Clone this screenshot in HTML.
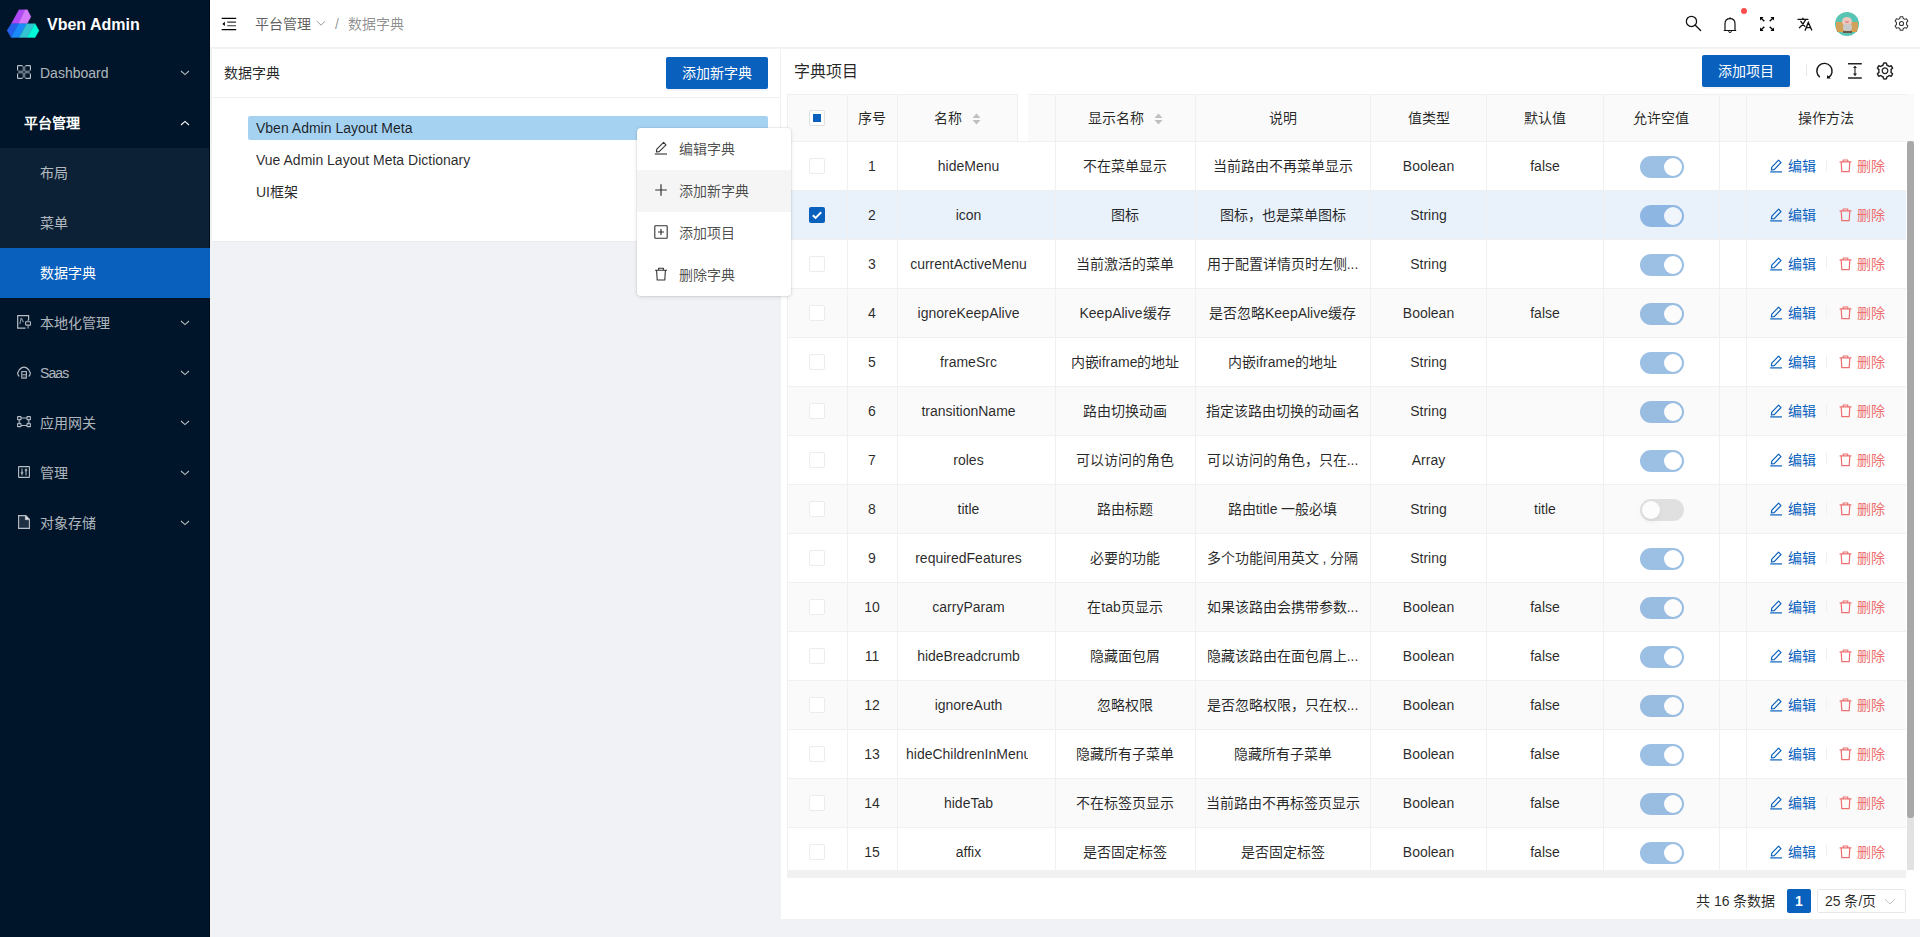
<!DOCTYPE html>
<html lang="zh-CN"><head><meta charset="utf-8">
<style>
*{box-sizing:border-box;margin:0;padding:0}
html,body{width:1920px;height:937px;overflow:hidden;background:#f0f2f5;font-family:"Liberation Sans",sans-serif;font-size:14px;color:rgba(0,0,0,.85)}
.a{position:absolute}
#side{left:0;top:0;width:210px;height:937px;background:#001529}
#side .edge{left:209px;top:0;width:1px;height:937px;background:#000c17}
.mi{position:absolute;left:0;width:209px;height:50px;line-height:50px;color:rgba(255,255,255,.7);white-space:nowrap}
.mi .t{position:absolute;left:40px;top:0}
.mi svg.ic{position:absolute;left:17px;top:18px}
.mi svg.ch{position:absolute;left:180px;top:21px}
#hdr{left:210px;top:0;width:1710px;height:47px;background:#fff}
#hline{left:210px;top:47px;width:1710px;height:1px;background:#f0f0f0}
.card{background:#fff}
.btn{position:absolute;background:#0960bd;color:#fff;border-radius:2px;text-align:center;line-height:32px;height:32px;box-shadow:0 2px 0 rgba(0,0,0,.045)}
.th{position:absolute;top:94px;height:47px;line-height:47px;background:#fafafa;text-align:center;color:rgba(0,0,0,.85)}
.row{position:absolute;left:787px;width:1119px;height:49px}
.cell{position:absolute;top:0;height:49px;line-height:48px;text-align:center;white-space:nowrap;overflow:hidden}
.vl{position:absolute;width:1px;background:#f0f0f0}
.hl{position:absolute;height:1px;background:#f0f0f0}
</style></head><body>

<!-- SIDEBAR -->
<div id="side" class="a">
  <div class="a edge"></div>
  <svg class="a" style="left:0;top:0" width="48" height="48" viewBox="0 0 48 48">
    <polygon points="11.3,23.7 19,9.8 25,9.8 18.6,23.7" fill="#b04af8" stroke="#b04af8" stroke-width="0.35"/>
    <polygon points="25,9.8 27.4,9.8 30.9,16.8 27.05,23.7 18.6,23.7" fill="#d67afc" stroke="#d67afc" stroke-width="0.35"/>
    <polygon points="7.07,30.6 11.3,23.7 18.6,23.7 11.3,37.5" fill="#2462ee" stroke="#2462ee" stroke-width="0.35"/>
    <polygon points="18.6,23.7 26.7,23.7 19.4,37.5 11.3,37.5" fill="#1a8bf8" stroke="#1a8bf8" stroke-width="0.35"/>
    <polygon points="26.7,23.7 34.7,23.7 27.4,37.5 19.4,37.5" fill="#34c3d0" stroke="#34c3d0" stroke-width="0.35"/>
    <polygon points="34.7,23.7 35.1,23.7 39,30.6 35.1,37.5 27.4,37.5" fill="#00fad8" stroke="#00fad8" stroke-width="0.35"/>
  </svg>
  <div class="a" style="left:47px;top:15px;font-size:16px;font-weight:bold;color:#fff;line-height:20px">Vben Admin</div>

  <div class="mi" style="top:48px"><svg class="a" style="left:17px;top:17px" width="14" height="14" viewBox="0 0 14 14"><g fill="#66727f"><rect x="5.4" y="1.2" width="3.2" height="11.6"/><rect x="1.2" y="5.4" width="11.6" height="3.2"/></g><rect x="6.3" y="6.3" width="1.4" height="1.4" fill="#001529"/><g fill="none" stroke="#b8bec6" stroke-width="1.2"><path d="M5.6 0.6H1.2Q0.6 0.6 0.6 1.2V5.6M8.4 0.6H12.8Q13.4 0.6 13.4 1.2V5.6M5.6 13.4H1.2Q0.6 13.4 0.6 12.8V8.4M8.4 13.4H12.8Q13.4 13.4 13.4 12.8V8.4"/></g><g fill="#001529"><rect x="1.8" y="1.8" width="3.4" height="3.4"/><rect x="8.8" y="1.8" width="3.4" height="3.4"/><rect x="1.8" y="8.8" width="3.4" height="3.4"/><rect x="8.8" y="8.8" width="3.4" height="3.4"/></g></svg><span class="t">Dashboard</span></div>
  <svg class="a" width="10" height="6" viewBox="0 0 10 6" style="left:180px;top:70px"><path d="M1 1L5 4.6L9 1" fill="none" stroke="rgba(255,255,255,.7)" stroke-width="1.1"/></svg>
  <div class="mi" style="top:98px;color:#fff;font-weight:bold"><span class="t" style="left:24px">平台管理</span></div>
  <svg class="a" width="10" height="6" viewBox="0 0 10 6" style="left:180px;top:120px"><path d="M1 5L5 1.4L9 5" fill="none" stroke="#fff" stroke-width="1.1"/></svg>
  <div class="a" style="left:0;top:148px;width:209px;height:150px;background:#0c2135"></div>
  <div class="mi" style="top:148px"><span class="t">布局</span></div>
  <div class="mi" style="top:198px"><span class="t">菜单</span></div>
  <div class="mi" style="top:248px;background:#0960bd;color:#fff;width:210px"><span class="t">数据字典</span></div>

  <div class="mi" style="top:298px"><svg class="a" style="left:17px;top:17px" width="14" height="14" viewBox="0 0 14 14"><path d="M11.6 5.2V0.7H0.7V13.1H8.6" fill="none" stroke="#b8bec6" stroke-width="1.2"/><path d="M4.2 2.8L2.8 9.2M4.4 3L6.4 7.2" fill="none" stroke="#8b96a2" stroke-width="1.1"/><rect x="8.6" y="6.7" width="5" height="3.4" rx="0.5" fill="none" stroke="#b8bec6" stroke-width="1.1"/><path d="M11.1 4.8V6.7M11.1 10.1V13.5" stroke="#8b96a2" stroke-width="1.3"/></svg><span class="t">本地化管理</span></div>
  <svg class="a" width="10" height="6" viewBox="0 0 10 6" style="left:180px;top:320px"><path d="M1 1L5 4.6L9 1" fill="none" stroke="rgba(255,255,255,.7)" stroke-width="1.1"/></svg>
  <div class="mi" style="top:348px"><svg class="a" style="left:17px;top:18px" width="14" height="13" viewBox="0 0 14 13"><path d="M2.3 10.4C0.9 9.4 0.5 8 0.8 6.7 1.3 4.6 3 2.6 4.9 1.6 6.2 1 7.8 1 9.1 1.6 11 2.6 12.7 4.6 13.2 6.7 13.5 8 13.1 9.4 11.7 10.4" fill="none" stroke="#b8bec6" stroke-width="1.2"/><rect x="4.8" y="5.6" width="4.6" height="6.5" fill="none" stroke="#b8bec6" stroke-width="1.1"/><path d="M5.3 8.8H9" stroke="#b8bec6" stroke-width="1"/><rect x="5.2" y="10.6" width="4" height="1.5" fill="#6d7986"/></svg><span class="t" style="letter-spacing:-0.9px">Saas</span></div>
  <svg class="a" width="10" height="6" viewBox="0 0 10 6" style="left:180px;top:370px"><path d="M1 1L5 4.6L9 1" fill="none" stroke="rgba(255,255,255,.7)" stroke-width="1.1"/></svg>
  <div class="mi" style="top:398px"><svg class="a" style="left:17px;top:18px" width="14" height="12" viewBox="0 0 14 12"><g fill="none" stroke="#b8bec6" stroke-width="1.1"><rect x="0.6" y="0.6" width="3.4" height="3" rx="0.4"/><rect x="10" y="0.6" width="3.4" height="3" rx="0.4"/><rect x="0.6" y="7.6" width="3.4" height="3" rx="0.4"/><rect x="10" y="7.6" width="3.4" height="3" rx="0.4"/><path d="M4 2H10M4 9.5H10"/></g><path d="M2.3 3.6V7.6M11.7 3.6V7.6" stroke="#8b96a2" stroke-width="1.6"/></svg><span class="t">应用网关</span></div>
  <svg class="a" width="10" height="6" viewBox="0 0 10 6" style="left:180px;top:420px"><path d="M1 1L5 4.6L9 1" fill="none" stroke="rgba(255,255,255,.7)" stroke-width="1.1"/></svg>
  <div class="mi" style="top:448px"><svg class="a" style="left:18px;top:18px" width="12" height="12" viewBox="0 0 12 12"><rect x="0.6" y="0.6" width="10.8" height="10.8" rx="0.5" fill="none" stroke="#b8bec6" stroke-width="1.1"/><path d="M4 2.5V9.5M8 2.5V9.5" stroke="#b8bec6" stroke-width="1"/><circle cx="4" cy="6.8" r="0.9" fill="none" stroke="#b8bec6" stroke-width="0.9"/><circle cx="8" cy="4.2" r="0.9" fill="none" stroke="#b8bec6" stroke-width="0.9"/></svg><span class="t">管理</span></div>
  <svg class="a" width="10" height="6" viewBox="0 0 10 6" style="left:180px;top:470px"><path d="M1 1L5 4.6L9 1" fill="none" stroke="rgba(255,255,255,.7)" stroke-width="1.1"/></svg>
  <div class="mi" style="top:498px"><svg class="a" style="left:18px;top:17px" width="12" height="14" viewBox="0 0 12 14"><path d="M0.6 0.6H7.8L11.4 4.2V13.4H0.6Z" fill="#1d2f42" stroke="#b8bec6" stroke-width="1.1"/><path d="M7.4 0.8V4.6H11.2" fill="#e8eaee" stroke="#b8bec6" stroke-width="1"/></svg><span class="t">对象存储</span></div>
  <svg class="a" width="10" height="6" viewBox="0 0 10 6" style="left:180px;top:520px"><path d="M1 1L5 4.6L9 1" fill="none" stroke="rgba(255,255,255,.7)" stroke-width="1.1"/></svg>

</div>

<!-- HEADER -->
<div id="hdr" class="a">
  <svg class="a" style="left:1px;top:10px" width="30" height="28" viewBox="0 0 30 28"><g fill="none" stroke="#000"><path d="M10.7 8.4H25.2M10.7 19.6H25.2" stroke-width="1.3"/><path d="M16.2 12.1H25M16.2 15.8H25" stroke-width="1.1" stroke="#333"/></g><polygon points="11.3,14 13.9,11.8 13.9,16.1" fill="#000"/></svg>
  <div class="a" style="left:45px;top:14px;line-height:20px;color:rgba(0,0,0,.65)">平台管理</div>
  <svg class="a" style="left:106px;top:20px" width="10" height="7" viewBox="0 0 10 7"><path d="M1 1.2L5 5.2L9 1.2" fill="none" stroke="#999" stroke-width="1"/></svg>
  <div class="a" style="left:125px;top:14px;line-height:20px;color:rgba(0,0,0,.45)">/</div>
  <div class="a" style="left:138px;top:14px;line-height:20px;color:rgba(0,0,0,.45)">数据字典</div>

  <svg class="a" style="left:1475px;top:15px" width="18" height="18" viewBox="0 0 18 18"><circle cx="6.46" cy="6.4" r="5.1" fill="none" stroke="#111" stroke-width="1.25"/><path d="M10.3 10.2L15.6 15.5" stroke="#111" stroke-width="1.3" stroke-linecap="round"/></svg>
  <svg class="a" style="left:1512px;top:15px" width="16" height="19" viewBox="0 0 16 19"><path d="M3 15.3V8.8C3 5.7 5 3.6 8 3.6S13 5.7 13 8.8V15.3M1.8 15.5H14.2" fill="none" stroke="#111" stroke-width="1.2"/><path d="M6.6 16.2A1.4 1.3 0 0 0 9.4 16.2" fill="none" stroke="#111" stroke-width="1"/><path d="M8 2.2V3.6" stroke="#111" stroke-width="1.1"/></svg>
  <div class="a" style="left:1531px;top:8px;width:6px;height:6px;border-radius:3px;background:#ff4d4f"></div>
  <svg class="a" style="left:1549px;top:15.5px" width="16" height="16" viewBox="0 0 16 16"><g fill="none" stroke="#000" stroke-width="1.3"><path d="M1.5 1.5L5.3 5.3M14.5 1.5L10.7 5.3M1.5 14.5L5.3 10.7M14.5 14.5L10.7 10.7"/></g><g fill="#000"><polygon points="1,1 4.6,1 1,4.6"/><polygon points="15,1 11.4,1 15,4.6"/><polygon points="1,15 4.6,15 1,11.4"/><polygon points="15,15 11.4,15 15,11.4"/></g></svg>
  <svg class="a" style="left:1585px;top:15px" width="20" height="18" viewBox="0 0 20 18"><g fill="none" stroke="#111" stroke-width="1.35" stroke-linecap="round"><path d="M3 4.3H12.9M7.9 3.1V4.3M10.6 4.8C9.3 7.6 7.2 10.7 4.4 12.7M5.8 6.4C7.1 8.3 8.4 9.8 9.8 11.4"/><path d="M10.2 15.2L13.3 7.5L16.7 15M11.4 12.6H15.6"/></g></svg>
  <div class="a" style="left:1625px;top:12px;width:24px;height:24px;border-radius:50%;background:#58c4b4;overflow:hidden">
    <div class="a" style="left:1px;top:9.5px;width:22px;height:9px;background:#d2a25a"></div>
    <div class="a" style="left:0;top:18.5px;width:24px;height:1px;background:#e0a040"></div>
    <div class="a" style="left:7px;top:5px;width:10px;height:9px;border-radius:50%;background:#ebc9bc"></div>
    <div class="a" style="left:9.5px;top:8.5px;width:4px;height:2.5px;border-radius:50%;background:#e58c90"></div>
    <div class="a" style="left:7.5px;top:12px;width:9px;height:7px;border-radius:3px;background:#c9c9c9"></div>
    <div class="a" style="left:7.5px;top:19px;width:9px;height:2px;background:#6a5a4a"></div>
    <div class="a" style="left:2px;top:19px;width:1px;height:4px;background:#333"></div>
    <div class="a" style="left:21px;top:19px;width:1px;height:4px;background:#333"></div>
  </div>
  <svg class="a" style="left:1683.5px;top:16px" width="15" height="15" viewBox="0 0 16 16"><path d="M6.6 0.8H9.4L9.9 2.7L11.5 3.6L13.4 3L14.8 5.4L13.4 6.8V9.2L14.8 10.6L13.4 13L11.5 12.4L9.9 13.3L9.4 15.2H6.6L6.1 13.3L4.5 12.4L2.6 13L1.2 10.6L2.6 9.2V6.8L1.2 5.4L2.6 3L4.5 3.6L6.1 2.7Z" fill="none" stroke="#333" stroke-width="1.1" stroke-linejoin="round"/><circle cx="8" cy="8" r="2.2" fill="none" stroke="#333" stroke-width="1.1"/></svg>
</div>
<div id="hline" class="a"></div>

<!-- LEFT CARD -->
<div class="a card" style="left:211px;top:48px;width:569px;height:193px">
  <div class="a" style="left:13px;top:15px;line-height:20px">数据字典</div>
  <div class="btn" style="left:455px;top:9px;width:102px">添加新字典</div>
  <div class="a" style="left:0;top:49px;width:569px;height:1px;background:#f0f0f0"></div>
  <div class="a" style="left:37px;top:68px;width:520px;height:24px;background:#a6d2f2;border-radius:2px"></div>
  <div class="a" style="left:45px;top:70px;line-height:20px">Vben Admin Layout Meta</div>
  <div class="a" style="left:45px;top:102px;line-height:20px">Vue Admin Layout Meta Dictionary</div>
  <div class="a" style="left:45px;top:134px;line-height:20px">UI框架</div>
</div>
<div class="a" style="left:780px;top:48px;width:1px;height:871px;background:#f0f0f0"></div>
<div class="a" style="left:211px;top:48px;width:1px;height:194px;background:#f0f0f0"></div>
<div class="a" style="left:211px;top:241px;width:570px;height:1px;background:#ececec"></div>
<div class="a" style="left:211px;top:48px;width:1709px;height:1px;background:#f3f3f3"></div>

<!-- RIGHT CARD -->
<div class="a card" style="left:781px;top:49px;width:1139px;height:870px"></div>
<div class="a" style="left:794px;top:62px;font-size:16px;line-height:20px;color:rgba(0,0,0,.85)">字典项目</div>
<div class="btn" style="left:1702px;top:55px;width:88px">添加项目</div>
<div class="a" style="left:1806px;top:64px;width:1px;height:12px;background:#e8e8e8"></div>
<svg class="a" style="left:1814px;top:62px" width="20" height="18" viewBox="0 0 20 18"><path d="M5.74 15.08A7.65 7.65 0 1 1 14.28 15.68" fill="none" stroke="#111" stroke-width="1.4"/><polygon points="13.2,12.9 12.9,16.5 16.8,16.5" fill="#111"/></svg>
<svg class="a" style="left:1847px;top:62px" width="16" height="18" viewBox="0 0 16 18"><path d="M1 1.8H14.8M1 16H14.8" stroke="#222" stroke-width="1.4"/><path d="M8 4.5V13.5" stroke="#333" stroke-width="1.2"/><polygon points="8,3.7 6,6.1 10,6.1" fill="#222"/><polygon points="8,14 6,11.6 10,11.6" fill="#222"/></svg>
<svg class="a" style="left:1874.8px;top:60.9px" width="20" height="20" viewBox="0 0 1024 1024"><path fill="#222" d="M924.8 625.7l-65.5-56c3.1-19 4.7-38.4 4.7-57.8s-1.6-38.8-4.7-57.8l65.5-56a32.03 32.03 0 0 0 9.3-35.2l-.9-2.6a443.74 443.74 0 0 0-79.7-137.9l-1.8-2.1a32.12 32.12 0 0 0-35.1-9.5l-81.3 28.9c-30-24.6-63.5-44-99.7-57.6l-15.7-85a32.05 32.05 0 0 0-25.8-25.7l-2.7-.5c-52.1-9.4-106.9-9.4-159 0l-2.7.5a32.05 32.05 0 0 0-25.8 25.7l-15.8 85.4a351.86 351.86 0 0 0-99 57.4l-81.9-29.1a32 32 0 0 0-35.1 9.5l-1.8 2.1a446.02 446.02 0 0 0-79.7 137.9l-.9 2.6c-4.5 12.5-.8 26.5 9.3 35.2l66.3 56.6c-3.1 18.8-4.6 38-4.6 57.1 0 19.2 1.5 38.4 4.6 57.1L99 625.5a32.03 32.03 0 0 0-9.3 35.2l.9 2.6c18.1 50.4 44.9 96.9 79.7 137.9l1.8 2.1a32.12 32.12 0 0 0 35.1 9.5l81.9-29.1c29.8 24.5 63.1 43.9 99 57.4l15.8 85.4a32.050 32.05 0 0 0 25.8 25.7l2.7.5a449.4 449.4 0 0 0 159 0l2.7-.5a32.05 32.05 0 0 0 25.8-25.7l15.7-85a350 350 0 0 0 99.7-57.6l81.3 28.9a32 32 0 0 0 35.1-9.5l1.8-2.1c34.8-41.1 61.6-87.5 79.7-137.9l.9-2.6c4.5-12.3.8-26.3-9.3-35zM788.3 465.9c2.5 15.1 3.8 30.6 3.8 46.1s-1.3 31-3.8 46.1l-6.6 40.1 74.7 63.9a370.03 370.03 0 0 1-42.6 73.6L721 702.8l-31.4 25.8c-23.9 19.6-50.5 35-79.3 45.8l-38.1 14.3-17.9 97a377.5 377.5 0 0 1-85 0l-17.9-97.2-37.8-14.5c-28.5-10.8-55-26.2-78.7-45.7l-31.4-25.9-93.4 33.2c-17-22.9-31.2-47.6-42.6-73.6l75.5-64.5-6.5-40c-2.4-14.9-3.7-30.3-3.7-45.5 0-15.3 1.2-30.6 3.7-45.5l6.5-40-75.5-64.5c11.3-26.1 25.6-50.7 42.6-73.6l93.4 33.2 31.4-25.9c23.7-19.5 50.2-34.9 78.7-45.7l37.9-14.3 17.9-97.2c28.1-3.2 56.8-3.2 85 0l17.9 97 38.1 14.3c28.7 10.8 55.4 26.2 79.3 45.8l31.4 25.8 92.8-32.9c17 22.9 31.2 47.6 42.6 73.6L781.8 426l6.5 39.9zM512 326c-97.2 0-176 78.8-176 176s78.8 176 176 176 176-78.8 176-176-78.8-176-176-176zm79.2 255.2A111.6 111.6 0 0 1 512 614c-29.9 0-58-11.7-79.2-32.8A111.6 111.6 0 0 1 400 502c0-29.9 11.7-58 32.8-79.2C454 401.6 482.1 390 512 390c29.9 0 58 11.6 79.2 32.8A111.6 111.6 0 0 1 624 502c0 29.9-11.7 58-32.8 79.2z"/></svg>
<div class="a" style="left:787px;top:94px;width:1119px;height:776px;overflow:hidden">
<div class="a" style="left:0;top:0;width:1119px;height:47px;background:#fafafa"></div>
<div class="a" style="left:230px;top:0;width:11px;height:47px;background:#fff"></div>
<div class="a" style="left:0;top:48px;width:1119px;height:48px;background:#fff"></div>
<div class="a" style="left:0;top:97px;width:1119px;height:48px;background:#e9f1fb"></div>
<div class="a" style="left:0;top:146px;width:1119px;height:48px;background:#fff"></div>
<div class="a" style="left:0;top:195px;width:1119px;height:48px;background:#fafafa"></div>
<div class="a" style="left:0;top:244px;width:1119px;height:48px;background:#fff"></div>
<div class="a" style="left:0;top:293px;width:1119px;height:48px;background:#fafafa"></div>
<div class="a" style="left:0;top:342px;width:1119px;height:48px;background:#fff"></div>
<div class="a" style="left:0;top:391px;width:1119px;height:48px;background:#fafafa"></div>
<div class="a" style="left:0;top:440px;width:1119px;height:48px;background:#fff"></div>
<div class="a" style="left:0;top:489px;width:1119px;height:48px;background:#fafafa"></div>
<div class="a" style="left:0;top:538px;width:1119px;height:48px;background:#fff"></div>
<div class="a" style="left:0;top:587px;width:1119px;height:48px;background:#fafafa"></div>
<div class="a" style="left:0;top:636px;width:1119px;height:48px;background:#fff"></div>
<div class="a" style="left:0;top:685px;width:1119px;height:48px;background:#fafafa"></div>
<div class="a" style="left:0;top:734px;width:1119px;height:48px;background:#fff"></div>
<div class="hl" style="left:0;top:0;width:230px"></div>
<div class="hl" style="left:241px;top:0;width:878px"></div>
<div class="hl" style="left:0;top:47px;width:1119px"></div>
<div class="hl" style="left:0;top:96px;width:1119px"></div>
<div class="hl" style="left:0;top:145px;width:1119px"></div>
<div class="hl" style="left:0;top:194px;width:1119px"></div>
<div class="hl" style="left:0;top:243px;width:1119px"></div>
<div class="hl" style="left:0;top:292px;width:1119px"></div>
<div class="hl" style="left:0;top:341px;width:1119px"></div>
<div class="hl" style="left:0;top:390px;width:1119px"></div>
<div class="hl" style="left:0;top:439px;width:1119px"></div>
<div class="hl" style="left:0;top:488px;width:1119px"></div>
<div class="hl" style="left:0;top:537px;width:1119px"></div>
<div class="hl" style="left:0;top:586px;width:1119px"></div>
<div class="hl" style="left:0;top:635px;width:1119px"></div>
<div class="hl" style="left:0;top:684px;width:1119px"></div>
<div class="hl" style="left:0;top:733px;width:1119px"></div>
<div class="hl" style="left:0;top:782px;width:1119px"></div>
<div class="vl" style="left:0px;top:0;height:776px"></div>
<div class="vl" style="left:60px;top:0;height:776px"></div>
<div class="vl" style="left:110px;top:0;height:776px"></div>
<div class="vl" style="left:268px;top:0;height:776px"></div>
<div class="vl" style="left:408px;top:0;height:776px"></div>
<div class="vl" style="left:583px;top:0;height:776px"></div>
<div class="vl" style="left:699px;top:0;height:776px"></div>
<div class="vl" style="left:816px;top:0;height:776px"></div>
<div class="vl" style="left:932px;top:0;height:776px"></div>
<div class="vl" style="left:959px;top:0;height:776px"></div>
<div class="vl" style="left:230px;top:0;height:47px"></div>
<div class="a" style="left:-65px;top:14px;width:300px;text-align:center;line-height:20px;white-space:nowrap;">序号</div>
<div class="a" style="left:20px;top:14px;width:300px;text-align:center;line-height:20px;white-space:nowrap;">名称<svg style="display:inline-block;vertical-align:-3px;margin-left:10px" width="9" height="14" viewBox="0 0 9 14"><polygon points="4.5,1.5 8.5,6 0.5,6" fill="#bfbfbf"/><polygon points="4.5,12.5 8.5,8 0.5,8" fill="#bfbfbf"/></svg></div>
<div class="a" style="left:188px;top:14px;width:300px;text-align:center;line-height:20px;white-space:nowrap;">显示名称<svg style="display:inline-block;vertical-align:-3px;margin-left:10px" width="9" height="14" viewBox="0 0 9 14"><polygon points="4.5,1.5 8.5,6 0.5,6" fill="#bfbfbf"/><polygon points="4.5,12.5 8.5,8 0.5,8" fill="#bfbfbf"/></svg></div>
<div class="a" style="left:345.5px;top:14px;width:300px;text-align:center;line-height:20px;white-space:nowrap;">说明</div>
<div class="a" style="left:491.5px;top:14px;width:300px;text-align:center;line-height:20px;white-space:nowrap;">值类型</div>
<div class="a" style="left:608px;top:14px;width:300px;text-align:center;line-height:20px;white-space:nowrap;">默认值</div>
<div class="a" style="left:724px;top:14px;width:300px;text-align:center;line-height:20px;white-space:nowrap;">允许空值</div>
<div class="a" style="left:889px;top:14px;width:300px;text-align:center;line-height:20px;white-space:nowrap;">操作方法</div>
<div class="a" style="left:22px;top:16px;width:16px;height:16px;border:1px solid #e0e0e0;border-radius:2px;background:#fff"></div>
<div class="a" style="left:26px;top:20px;width:8px;height:8px;background:#0960bd"></div>
<div class="a" style="left:22px;top:64px;width:16px;height:16px;border:1px solid #ececec;border-radius:2px;background:#fff"></div>
<div class="a" style="left:-65px;top:62px;width:300px;text-align:center;line-height:20px;white-space:nowrap;">1</div>
<div class="a" style="left:31.5px;top:62px;width:300px;text-align:center;line-height:20px;white-space:nowrap;">hideMenu</div>
<div class="a" style="left:188px;top:62px;width:300px;text-align:center;line-height:20px;white-space:nowrap;">不在菜单显示</div>
<div class="a" style="left:345.5px;top:62px;width:300px;text-align:center;line-height:20px;white-space:nowrap;">当前路由不再菜单显示</div>
<div class="a" style="left:491.5px;top:62px;width:300px;text-align:center;line-height:20px;white-space:nowrap;">Boolean</div>
<div class="a" style="left:608px;top:62px;width:300px;text-align:center;line-height:20px;white-space:nowrap;">false</div>
<div class="a" style="left:853px;top:62px;width:44px;height:22px;border-radius:11px;background:#0960bd;opacity:.4"><div class="a" style="left:24px;top:2px;width:18px;height:18px;border-radius:9px;background:#fff"></div></div>
<svg class="a" style="left:982px;top:65px" width="14" height="14" viewBox="0 0 14 14"><path d="M1.2 12.9H13" stroke="#0960bd" stroke-width="1.2"/><path d="M2.4 11L2.8 8.2L9.6 1.2L12 3.6L5.2 10.6Z" fill="none" stroke="#0960bd" stroke-width="1.2" stroke-linejoin="round"/></svg>
<div class="a" style="left:1001px;top:62px;line-height:20px;color:#0960bd">编辑</div>
<div class="a" style="left:1039px;top:65px;width:1px;height:12px;background:#f0f0f0"></div>
<svg class="a" style="left:1052px;top:65px" width="13" height="14" viewBox="0 0 13 14"><path d="M0.6 2.9H12.4M4.2 2.9V1H8.8V2.9M2.2 2.9L2.8 12.6H10.2L10.8 2.9" fill="none" stroke="#ed6f6f" stroke-width="1.2" stroke-linejoin="round"/></svg>
<div class="a" style="left:1070px;top:62px;line-height:20px;color:#ed6f6f">删除</div>
<div class="a" style="left:22px;top:113px;width:16px;height:16px;border-radius:2px;background:#0960bd"></div>
<svg class="a" style="left:22px;top:113px" width="16" height="16" viewBox="0 0 16 16"><path d="M3.8 8.2L6.6 10.9L12.2 5.3" fill="none" stroke="#fff" stroke-width="2"/></svg>
<div class="a" style="left:-65px;top:111px;width:300px;text-align:center;line-height:20px;white-space:nowrap;">2</div>
<div class="a" style="left:31.5px;top:111px;width:300px;text-align:center;line-height:20px;white-space:nowrap;">icon</div>
<div class="a" style="left:188px;top:111px;width:300px;text-align:center;line-height:20px;white-space:nowrap;">图标</div>
<div class="a" style="left:345.5px;top:111px;width:300px;text-align:center;line-height:20px;white-space:nowrap;">图标，也是菜单图标</div>
<div class="a" style="left:491.5px;top:111px;width:300px;text-align:center;line-height:20px;white-space:nowrap;">String</div>
<div class="a" style="left:608px;top:111px;width:300px;text-align:center;line-height:20px;white-space:nowrap;"></div>
<div class="a" style="left:853px;top:111px;width:44px;height:22px;border-radius:11px;background:#0960bd;opacity:.4"><div class="a" style="left:24px;top:2px;width:18px;height:18px;border-radius:9px;background:#fff"></div></div>
<svg class="a" style="left:982px;top:114px" width="14" height="14" viewBox="0 0 14 14"><path d="M1.2 12.9H13" stroke="#0960bd" stroke-width="1.2"/><path d="M2.4 11L2.8 8.2L9.6 1.2L12 3.6L5.2 10.6Z" fill="none" stroke="#0960bd" stroke-width="1.2" stroke-linejoin="round"/></svg>
<div class="a" style="left:1001px;top:111px;line-height:20px;color:#0960bd">编辑</div>
<div class="a" style="left:1039px;top:114px;width:1px;height:12px;background:#f0f0f0"></div>
<svg class="a" style="left:1052px;top:114px" width="13" height="14" viewBox="0 0 13 14"><path d="M0.6 2.9H12.4M4.2 2.9V1H8.8V2.9M2.2 2.9L2.8 12.6H10.2L10.8 2.9" fill="none" stroke="#ed6f6f" stroke-width="1.2" stroke-linejoin="round"/></svg>
<div class="a" style="left:1070px;top:111px;line-height:20px;color:#ed6f6f">删除</div>
<div class="a" style="left:22px;top:162px;width:16px;height:16px;border:1px solid #ececec;border-radius:2px;background:#fff"></div>
<div class="a" style="left:-65px;top:160px;width:300px;text-align:center;line-height:20px;white-space:nowrap;">3</div>
<div class="a" style="left:31.5px;top:160px;width:300px;text-align:center;line-height:20px;white-space:nowrap;">currentActiveMenu</div>
<div class="a" style="left:188px;top:160px;width:300px;text-align:center;line-height:20px;white-space:nowrap;">当前激活的菜单</div>
<div class="a" style="left:345.5px;top:160px;width:300px;text-align:center;line-height:20px;white-space:nowrap;">用于配置详情页时左侧...</div>
<div class="a" style="left:491.5px;top:160px;width:300px;text-align:center;line-height:20px;white-space:nowrap;">String</div>
<div class="a" style="left:608px;top:160px;width:300px;text-align:center;line-height:20px;white-space:nowrap;"></div>
<div class="a" style="left:853px;top:160px;width:44px;height:22px;border-radius:11px;background:#0960bd;opacity:.4"><div class="a" style="left:24px;top:2px;width:18px;height:18px;border-radius:9px;background:#fff"></div></div>
<svg class="a" style="left:982px;top:163px" width="14" height="14" viewBox="0 0 14 14"><path d="M1.2 12.9H13" stroke="#0960bd" stroke-width="1.2"/><path d="M2.4 11L2.8 8.2L9.6 1.2L12 3.6L5.2 10.6Z" fill="none" stroke="#0960bd" stroke-width="1.2" stroke-linejoin="round"/></svg>
<div class="a" style="left:1001px;top:160px;line-height:20px;color:#0960bd">编辑</div>
<div class="a" style="left:1039px;top:163px;width:1px;height:12px;background:#f0f0f0"></div>
<svg class="a" style="left:1052px;top:163px" width="13" height="14" viewBox="0 0 13 14"><path d="M0.6 2.9H12.4M4.2 2.9V1H8.8V2.9M2.2 2.9L2.8 12.6H10.2L10.8 2.9" fill="none" stroke="#ed6f6f" stroke-width="1.2" stroke-linejoin="round"/></svg>
<div class="a" style="left:1070px;top:160px;line-height:20px;color:#ed6f6f">删除</div>
<div class="a" style="left:22px;top:211px;width:16px;height:16px;border:1px solid #ececec;border-radius:2px;background:#fff"></div>
<div class="a" style="left:-65px;top:209px;width:300px;text-align:center;line-height:20px;white-space:nowrap;">4</div>
<div class="a" style="left:31.5px;top:209px;width:300px;text-align:center;line-height:20px;white-space:nowrap;">ignoreKeepAlive</div>
<div class="a" style="left:188px;top:209px;width:300px;text-align:center;line-height:20px;white-space:nowrap;">KeepAlive缓存</div>
<div class="a" style="left:345.5px;top:209px;width:300px;text-align:center;line-height:20px;white-space:nowrap;">是否忽略KeepAlive缓存</div>
<div class="a" style="left:491.5px;top:209px;width:300px;text-align:center;line-height:20px;white-space:nowrap;">Boolean</div>
<div class="a" style="left:608px;top:209px;width:300px;text-align:center;line-height:20px;white-space:nowrap;">false</div>
<div class="a" style="left:853px;top:209px;width:44px;height:22px;border-radius:11px;background:#0960bd;opacity:.4"><div class="a" style="left:24px;top:2px;width:18px;height:18px;border-radius:9px;background:#fff"></div></div>
<svg class="a" style="left:982px;top:212px" width="14" height="14" viewBox="0 0 14 14"><path d="M1.2 12.9H13" stroke="#0960bd" stroke-width="1.2"/><path d="M2.4 11L2.8 8.2L9.6 1.2L12 3.6L5.2 10.6Z" fill="none" stroke="#0960bd" stroke-width="1.2" stroke-linejoin="round"/></svg>
<div class="a" style="left:1001px;top:209px;line-height:20px;color:#0960bd">编辑</div>
<div class="a" style="left:1039px;top:212px;width:1px;height:12px;background:#f0f0f0"></div>
<svg class="a" style="left:1052px;top:212px" width="13" height="14" viewBox="0 0 13 14"><path d="M0.6 2.9H12.4M4.2 2.9V1H8.8V2.9M2.2 2.9L2.8 12.6H10.2L10.8 2.9" fill="none" stroke="#ed6f6f" stroke-width="1.2" stroke-linejoin="round"/></svg>
<div class="a" style="left:1070px;top:209px;line-height:20px;color:#ed6f6f">删除</div>
<div class="a" style="left:22px;top:260px;width:16px;height:16px;border:1px solid #ececec;border-radius:2px;background:#fff"></div>
<div class="a" style="left:-65px;top:258px;width:300px;text-align:center;line-height:20px;white-space:nowrap;">5</div>
<div class="a" style="left:31.5px;top:258px;width:300px;text-align:center;line-height:20px;white-space:nowrap;">frameSrc</div>
<div class="a" style="left:188px;top:258px;width:300px;text-align:center;line-height:20px;white-space:nowrap;">内嵌iframe的地址</div>
<div class="a" style="left:345.5px;top:258px;width:300px;text-align:center;line-height:20px;white-space:nowrap;">内嵌iframe的地址</div>
<div class="a" style="left:491.5px;top:258px;width:300px;text-align:center;line-height:20px;white-space:nowrap;">String</div>
<div class="a" style="left:608px;top:258px;width:300px;text-align:center;line-height:20px;white-space:nowrap;"></div>
<div class="a" style="left:853px;top:258px;width:44px;height:22px;border-radius:11px;background:#0960bd;opacity:.4"><div class="a" style="left:24px;top:2px;width:18px;height:18px;border-radius:9px;background:#fff"></div></div>
<svg class="a" style="left:982px;top:261px" width="14" height="14" viewBox="0 0 14 14"><path d="M1.2 12.9H13" stroke="#0960bd" stroke-width="1.2"/><path d="M2.4 11L2.8 8.2L9.6 1.2L12 3.6L5.2 10.6Z" fill="none" stroke="#0960bd" stroke-width="1.2" stroke-linejoin="round"/></svg>
<div class="a" style="left:1001px;top:258px;line-height:20px;color:#0960bd">编辑</div>
<div class="a" style="left:1039px;top:261px;width:1px;height:12px;background:#f0f0f0"></div>
<svg class="a" style="left:1052px;top:261px" width="13" height="14" viewBox="0 0 13 14"><path d="M0.6 2.9H12.4M4.2 2.9V1H8.8V2.9M2.2 2.9L2.8 12.6H10.2L10.8 2.9" fill="none" stroke="#ed6f6f" stroke-width="1.2" stroke-linejoin="round"/></svg>
<div class="a" style="left:1070px;top:258px;line-height:20px;color:#ed6f6f">删除</div>
<div class="a" style="left:22px;top:309px;width:16px;height:16px;border:1px solid #ececec;border-radius:2px;background:#fff"></div>
<div class="a" style="left:-65px;top:307px;width:300px;text-align:center;line-height:20px;white-space:nowrap;">6</div>
<div class="a" style="left:31.5px;top:307px;width:300px;text-align:center;line-height:20px;white-space:nowrap;">transitionName</div>
<div class="a" style="left:188px;top:307px;width:300px;text-align:center;line-height:20px;white-space:nowrap;">路由切换动画</div>
<div class="a" style="left:345.5px;top:307px;width:300px;text-align:center;line-height:20px;white-space:nowrap;">指定该路由切换的动画名</div>
<div class="a" style="left:491.5px;top:307px;width:300px;text-align:center;line-height:20px;white-space:nowrap;">String</div>
<div class="a" style="left:608px;top:307px;width:300px;text-align:center;line-height:20px;white-space:nowrap;"></div>
<div class="a" style="left:853px;top:307px;width:44px;height:22px;border-radius:11px;background:#0960bd;opacity:.4"><div class="a" style="left:24px;top:2px;width:18px;height:18px;border-radius:9px;background:#fff"></div></div>
<svg class="a" style="left:982px;top:310px" width="14" height="14" viewBox="0 0 14 14"><path d="M1.2 12.9H13" stroke="#0960bd" stroke-width="1.2"/><path d="M2.4 11L2.8 8.2L9.6 1.2L12 3.6L5.2 10.6Z" fill="none" stroke="#0960bd" stroke-width="1.2" stroke-linejoin="round"/></svg>
<div class="a" style="left:1001px;top:307px;line-height:20px;color:#0960bd">编辑</div>
<div class="a" style="left:1039px;top:310px;width:1px;height:12px;background:#f0f0f0"></div>
<svg class="a" style="left:1052px;top:310px" width="13" height="14" viewBox="0 0 13 14"><path d="M0.6 2.9H12.4M4.2 2.9V1H8.8V2.9M2.2 2.9L2.8 12.6H10.2L10.8 2.9" fill="none" stroke="#ed6f6f" stroke-width="1.2" stroke-linejoin="round"/></svg>
<div class="a" style="left:1070px;top:307px;line-height:20px;color:#ed6f6f">删除</div>
<div class="a" style="left:22px;top:358px;width:16px;height:16px;border:1px solid #ececec;border-radius:2px;background:#fff"></div>
<div class="a" style="left:-65px;top:356px;width:300px;text-align:center;line-height:20px;white-space:nowrap;">7</div>
<div class="a" style="left:31.5px;top:356px;width:300px;text-align:center;line-height:20px;white-space:nowrap;">roles</div>
<div class="a" style="left:188px;top:356px;width:300px;text-align:center;line-height:20px;white-space:nowrap;">可以访问的角色</div>
<div class="a" style="left:345.5px;top:356px;width:300px;text-align:center;line-height:20px;white-space:nowrap;">可以访问的角色，只在...</div>
<div class="a" style="left:491.5px;top:356px;width:300px;text-align:center;line-height:20px;white-space:nowrap;">Array</div>
<div class="a" style="left:608px;top:356px;width:300px;text-align:center;line-height:20px;white-space:nowrap;"></div>
<div class="a" style="left:853px;top:356px;width:44px;height:22px;border-radius:11px;background:#0960bd;opacity:.4"><div class="a" style="left:24px;top:2px;width:18px;height:18px;border-radius:9px;background:#fff"></div></div>
<svg class="a" style="left:982px;top:359px" width="14" height="14" viewBox="0 0 14 14"><path d="M1.2 12.9H13" stroke="#0960bd" stroke-width="1.2"/><path d="M2.4 11L2.8 8.2L9.6 1.2L12 3.6L5.2 10.6Z" fill="none" stroke="#0960bd" stroke-width="1.2" stroke-linejoin="round"/></svg>
<div class="a" style="left:1001px;top:356px;line-height:20px;color:#0960bd">编辑</div>
<div class="a" style="left:1039px;top:359px;width:1px;height:12px;background:#f0f0f0"></div>
<svg class="a" style="left:1052px;top:359px" width="13" height="14" viewBox="0 0 13 14"><path d="M0.6 2.9H12.4M4.2 2.9V1H8.8V2.9M2.2 2.9L2.8 12.6H10.2L10.8 2.9" fill="none" stroke="#ed6f6f" stroke-width="1.2" stroke-linejoin="round"/></svg>
<div class="a" style="left:1070px;top:356px;line-height:20px;color:#ed6f6f">删除</div>
<div class="a" style="left:22px;top:407px;width:16px;height:16px;border:1px solid #ececec;border-radius:2px;background:#fff"></div>
<div class="a" style="left:-65px;top:405px;width:300px;text-align:center;line-height:20px;white-space:nowrap;">8</div>
<div class="a" style="left:31.5px;top:405px;width:300px;text-align:center;line-height:20px;white-space:nowrap;">title</div>
<div class="a" style="left:188px;top:405px;width:300px;text-align:center;line-height:20px;white-space:nowrap;">路由标题</div>
<div class="a" style="left:345.5px;top:405px;width:300px;text-align:center;line-height:20px;white-space:nowrap;">路由title 一般必填</div>
<div class="a" style="left:491.5px;top:405px;width:300px;text-align:center;line-height:20px;white-space:nowrap;">String</div>
<div class="a" style="left:608px;top:405px;width:300px;text-align:center;line-height:20px;white-space:nowrap;">title</div>
<div class="a" style="left:853px;top:405px;width:44px;height:22px;border-radius:11px;background:rgba(0,0,0,.25);opacity:.4"><div class="a" style="left:2px;top:2px;width:18px;height:18px;border-radius:9px;background:#fff;box-shadow:0 2px 4px rgba(0,35,11,.2)"></div></div>
<svg class="a" style="left:982px;top:408px" width="14" height="14" viewBox="0 0 14 14"><path d="M1.2 12.9H13" stroke="#0960bd" stroke-width="1.2"/><path d="M2.4 11L2.8 8.2L9.6 1.2L12 3.6L5.2 10.6Z" fill="none" stroke="#0960bd" stroke-width="1.2" stroke-linejoin="round"/></svg>
<div class="a" style="left:1001px;top:405px;line-height:20px;color:#0960bd">编辑</div>
<div class="a" style="left:1039px;top:408px;width:1px;height:12px;background:#f0f0f0"></div>
<svg class="a" style="left:1052px;top:408px" width="13" height="14" viewBox="0 0 13 14"><path d="M0.6 2.9H12.4M4.2 2.9V1H8.8V2.9M2.2 2.9L2.8 12.6H10.2L10.8 2.9" fill="none" stroke="#ed6f6f" stroke-width="1.2" stroke-linejoin="round"/></svg>
<div class="a" style="left:1070px;top:405px;line-height:20px;color:#ed6f6f">删除</div>
<div class="a" style="left:22px;top:456px;width:16px;height:16px;border:1px solid #ececec;border-radius:2px;background:#fff"></div>
<div class="a" style="left:-65px;top:454px;width:300px;text-align:center;line-height:20px;white-space:nowrap;">9</div>
<div class="a" style="left:31.5px;top:454px;width:300px;text-align:center;line-height:20px;white-space:nowrap;">requiredFeatures</div>
<div class="a" style="left:188px;top:454px;width:300px;text-align:center;line-height:20px;white-space:nowrap;">必要的功能</div>
<div class="a" style="left:345.5px;top:454px;width:300px;text-align:center;line-height:20px;white-space:nowrap;">多个功能间用英文 , 分隔</div>
<div class="a" style="left:491.5px;top:454px;width:300px;text-align:center;line-height:20px;white-space:nowrap;">String</div>
<div class="a" style="left:608px;top:454px;width:300px;text-align:center;line-height:20px;white-space:nowrap;"></div>
<div class="a" style="left:853px;top:454px;width:44px;height:22px;border-radius:11px;background:#0960bd;opacity:.4"><div class="a" style="left:24px;top:2px;width:18px;height:18px;border-radius:9px;background:#fff"></div></div>
<svg class="a" style="left:982px;top:457px" width="14" height="14" viewBox="0 0 14 14"><path d="M1.2 12.9H13" stroke="#0960bd" stroke-width="1.2"/><path d="M2.4 11L2.8 8.2L9.6 1.2L12 3.6L5.2 10.6Z" fill="none" stroke="#0960bd" stroke-width="1.2" stroke-linejoin="round"/></svg>
<div class="a" style="left:1001px;top:454px;line-height:20px;color:#0960bd">编辑</div>
<div class="a" style="left:1039px;top:457px;width:1px;height:12px;background:#f0f0f0"></div>
<svg class="a" style="left:1052px;top:457px" width="13" height="14" viewBox="0 0 13 14"><path d="M0.6 2.9H12.4M4.2 2.9V1H8.8V2.9M2.2 2.9L2.8 12.6H10.2L10.8 2.9" fill="none" stroke="#ed6f6f" stroke-width="1.2" stroke-linejoin="round"/></svg>
<div class="a" style="left:1070px;top:454px;line-height:20px;color:#ed6f6f">删除</div>
<div class="a" style="left:22px;top:505px;width:16px;height:16px;border:1px solid #ececec;border-radius:2px;background:#fff"></div>
<div class="a" style="left:-65px;top:503px;width:300px;text-align:center;line-height:20px;white-space:nowrap;">10</div>
<div class="a" style="left:31.5px;top:503px;width:300px;text-align:center;line-height:20px;white-space:nowrap;">carryParam</div>
<div class="a" style="left:188px;top:503px;width:300px;text-align:center;line-height:20px;white-space:nowrap;">在tab页显示</div>
<div class="a" style="left:345.5px;top:503px;width:300px;text-align:center;line-height:20px;white-space:nowrap;">如果该路由会携带参数...</div>
<div class="a" style="left:491.5px;top:503px;width:300px;text-align:center;line-height:20px;white-space:nowrap;">Boolean</div>
<div class="a" style="left:608px;top:503px;width:300px;text-align:center;line-height:20px;white-space:nowrap;">false</div>
<div class="a" style="left:853px;top:503px;width:44px;height:22px;border-radius:11px;background:#0960bd;opacity:.4"><div class="a" style="left:24px;top:2px;width:18px;height:18px;border-radius:9px;background:#fff"></div></div>
<svg class="a" style="left:982px;top:506px" width="14" height="14" viewBox="0 0 14 14"><path d="M1.2 12.9H13" stroke="#0960bd" stroke-width="1.2"/><path d="M2.4 11L2.8 8.2L9.6 1.2L12 3.6L5.2 10.6Z" fill="none" stroke="#0960bd" stroke-width="1.2" stroke-linejoin="round"/></svg>
<div class="a" style="left:1001px;top:503px;line-height:20px;color:#0960bd">编辑</div>
<div class="a" style="left:1039px;top:506px;width:1px;height:12px;background:#f0f0f0"></div>
<svg class="a" style="left:1052px;top:506px" width="13" height="14" viewBox="0 0 13 14"><path d="M0.6 2.9H12.4M4.2 2.9V1H8.8V2.9M2.2 2.9L2.8 12.6H10.2L10.8 2.9" fill="none" stroke="#ed6f6f" stroke-width="1.2" stroke-linejoin="round"/></svg>
<div class="a" style="left:1070px;top:503px;line-height:20px;color:#ed6f6f">删除</div>
<div class="a" style="left:22px;top:554px;width:16px;height:16px;border:1px solid #ececec;border-radius:2px;background:#fff"></div>
<div class="a" style="left:-65px;top:552px;width:300px;text-align:center;line-height:20px;white-space:nowrap;">11</div>
<div class="a" style="left:31.5px;top:552px;width:300px;text-align:center;line-height:20px;white-space:nowrap;">hideBreadcrumb</div>
<div class="a" style="left:188px;top:552px;width:300px;text-align:center;line-height:20px;white-space:nowrap;">隐藏面包屑</div>
<div class="a" style="left:345.5px;top:552px;width:300px;text-align:center;line-height:20px;white-space:nowrap;">隐藏该路由在面包屑上...</div>
<div class="a" style="left:491.5px;top:552px;width:300px;text-align:center;line-height:20px;white-space:nowrap;">Boolean</div>
<div class="a" style="left:608px;top:552px;width:300px;text-align:center;line-height:20px;white-space:nowrap;">false</div>
<div class="a" style="left:853px;top:552px;width:44px;height:22px;border-radius:11px;background:#0960bd;opacity:.4"><div class="a" style="left:24px;top:2px;width:18px;height:18px;border-radius:9px;background:#fff"></div></div>
<svg class="a" style="left:982px;top:555px" width="14" height="14" viewBox="0 0 14 14"><path d="M1.2 12.9H13" stroke="#0960bd" stroke-width="1.2"/><path d="M2.4 11L2.8 8.2L9.6 1.2L12 3.6L5.2 10.6Z" fill="none" stroke="#0960bd" stroke-width="1.2" stroke-linejoin="round"/></svg>
<div class="a" style="left:1001px;top:552px;line-height:20px;color:#0960bd">编辑</div>
<div class="a" style="left:1039px;top:555px;width:1px;height:12px;background:#f0f0f0"></div>
<svg class="a" style="left:1052px;top:555px" width="13" height="14" viewBox="0 0 13 14"><path d="M0.6 2.9H12.4M4.2 2.9V1H8.8V2.9M2.2 2.9L2.8 12.6H10.2L10.8 2.9" fill="none" stroke="#ed6f6f" stroke-width="1.2" stroke-linejoin="round"/></svg>
<div class="a" style="left:1070px;top:552px;line-height:20px;color:#ed6f6f">删除</div>
<div class="a" style="left:22px;top:603px;width:16px;height:16px;border:1px solid #ececec;border-radius:2px;background:#fff"></div>
<div class="a" style="left:-65px;top:601px;width:300px;text-align:center;line-height:20px;white-space:nowrap;">12</div>
<div class="a" style="left:31.5px;top:601px;width:300px;text-align:center;line-height:20px;white-space:nowrap;">ignoreAuth</div>
<div class="a" style="left:188px;top:601px;width:300px;text-align:center;line-height:20px;white-space:nowrap;">忽略权限</div>
<div class="a" style="left:345.5px;top:601px;width:300px;text-align:center;line-height:20px;white-space:nowrap;">是否忽略权限，只在权...</div>
<div class="a" style="left:491.5px;top:601px;width:300px;text-align:center;line-height:20px;white-space:nowrap;">Boolean</div>
<div class="a" style="left:608px;top:601px;width:300px;text-align:center;line-height:20px;white-space:nowrap;">false</div>
<div class="a" style="left:853px;top:601px;width:44px;height:22px;border-radius:11px;background:#0960bd;opacity:.4"><div class="a" style="left:24px;top:2px;width:18px;height:18px;border-radius:9px;background:#fff"></div></div>
<svg class="a" style="left:982px;top:604px" width="14" height="14" viewBox="0 0 14 14"><path d="M1.2 12.9H13" stroke="#0960bd" stroke-width="1.2"/><path d="M2.4 11L2.8 8.2L9.6 1.2L12 3.6L5.2 10.6Z" fill="none" stroke="#0960bd" stroke-width="1.2" stroke-linejoin="round"/></svg>
<div class="a" style="left:1001px;top:601px;line-height:20px;color:#0960bd">编辑</div>
<div class="a" style="left:1039px;top:604px;width:1px;height:12px;background:#f0f0f0"></div>
<svg class="a" style="left:1052px;top:604px" width="13" height="14" viewBox="0 0 13 14"><path d="M0.6 2.9H12.4M4.2 2.9V1H8.8V2.9M2.2 2.9L2.8 12.6H10.2L10.8 2.9" fill="none" stroke="#ed6f6f" stroke-width="1.2" stroke-linejoin="round"/></svg>
<div class="a" style="left:1070px;top:601px;line-height:20px;color:#ed6f6f">删除</div>
<div class="a" style="left:22px;top:652px;width:16px;height:16px;border:1px solid #ececec;border-radius:2px;background:#fff"></div>
<div class="a" style="left:-65px;top:650px;width:300px;text-align:center;line-height:20px;white-space:nowrap;">13</div>
<div class="a" style="left:119px;top:650px;width:122px;overflow:hidden;line-height:20px;white-space:nowrap">hideChildrenInMenu</div>
<div class="a" style="left:188px;top:650px;width:300px;text-align:center;line-height:20px;white-space:nowrap;">隐藏所有子菜单</div>
<div class="a" style="left:345.5px;top:650px;width:300px;text-align:center;line-height:20px;white-space:nowrap;">隐藏所有子菜单</div>
<div class="a" style="left:491.5px;top:650px;width:300px;text-align:center;line-height:20px;white-space:nowrap;">Boolean</div>
<div class="a" style="left:608px;top:650px;width:300px;text-align:center;line-height:20px;white-space:nowrap;">false</div>
<div class="a" style="left:853px;top:650px;width:44px;height:22px;border-radius:11px;background:#0960bd;opacity:.4"><div class="a" style="left:24px;top:2px;width:18px;height:18px;border-radius:9px;background:#fff"></div></div>
<svg class="a" style="left:982px;top:653px" width="14" height="14" viewBox="0 0 14 14"><path d="M1.2 12.9H13" stroke="#0960bd" stroke-width="1.2"/><path d="M2.4 11L2.8 8.2L9.6 1.2L12 3.6L5.2 10.6Z" fill="none" stroke="#0960bd" stroke-width="1.2" stroke-linejoin="round"/></svg>
<div class="a" style="left:1001px;top:650px;line-height:20px;color:#0960bd">编辑</div>
<div class="a" style="left:1039px;top:653px;width:1px;height:12px;background:#f0f0f0"></div>
<svg class="a" style="left:1052px;top:653px" width="13" height="14" viewBox="0 0 13 14"><path d="M0.6 2.9H12.4M4.2 2.9V1H8.8V2.9M2.2 2.9L2.8 12.6H10.2L10.8 2.9" fill="none" stroke="#ed6f6f" stroke-width="1.2" stroke-linejoin="round"/></svg>
<div class="a" style="left:1070px;top:650px;line-height:20px;color:#ed6f6f">删除</div>
<div class="a" style="left:22px;top:701px;width:16px;height:16px;border:1px solid #ececec;border-radius:2px;background:#fff"></div>
<div class="a" style="left:-65px;top:699px;width:300px;text-align:center;line-height:20px;white-space:nowrap;">14</div>
<div class="a" style="left:31.5px;top:699px;width:300px;text-align:center;line-height:20px;white-space:nowrap;">hideTab</div>
<div class="a" style="left:188px;top:699px;width:300px;text-align:center;line-height:20px;white-space:nowrap;">不在标签页显示</div>
<div class="a" style="left:345.5px;top:699px;width:300px;text-align:center;line-height:20px;white-space:nowrap;">当前路由不再标签页显示</div>
<div class="a" style="left:491.5px;top:699px;width:300px;text-align:center;line-height:20px;white-space:nowrap;">Boolean</div>
<div class="a" style="left:608px;top:699px;width:300px;text-align:center;line-height:20px;white-space:nowrap;">false</div>
<div class="a" style="left:853px;top:699px;width:44px;height:22px;border-radius:11px;background:#0960bd;opacity:.4"><div class="a" style="left:24px;top:2px;width:18px;height:18px;border-radius:9px;background:#fff"></div></div>
<svg class="a" style="left:982px;top:702px" width="14" height="14" viewBox="0 0 14 14"><path d="M1.2 12.9H13" stroke="#0960bd" stroke-width="1.2"/><path d="M2.4 11L2.8 8.2L9.6 1.2L12 3.6L5.2 10.6Z" fill="none" stroke="#0960bd" stroke-width="1.2" stroke-linejoin="round"/></svg>
<div class="a" style="left:1001px;top:699px;line-height:20px;color:#0960bd">编辑</div>
<div class="a" style="left:1039px;top:702px;width:1px;height:12px;background:#f0f0f0"></div>
<svg class="a" style="left:1052px;top:702px" width="13" height="14" viewBox="0 0 13 14"><path d="M0.6 2.9H12.4M4.2 2.9V1H8.8V2.9M2.2 2.9L2.8 12.6H10.2L10.8 2.9" fill="none" stroke="#ed6f6f" stroke-width="1.2" stroke-linejoin="round"/></svg>
<div class="a" style="left:1070px;top:699px;line-height:20px;color:#ed6f6f">删除</div>
<div class="a" style="left:22px;top:750px;width:16px;height:16px;border:1px solid #ececec;border-radius:2px;background:#fff"></div>
<div class="a" style="left:-65px;top:748px;width:300px;text-align:center;line-height:20px;white-space:nowrap;">15</div>
<div class="a" style="left:31.5px;top:748px;width:300px;text-align:center;line-height:20px;white-space:nowrap;">affix</div>
<div class="a" style="left:188px;top:748px;width:300px;text-align:center;line-height:20px;white-space:nowrap;">是否固定标签</div>
<div class="a" style="left:345.5px;top:748px;width:300px;text-align:center;line-height:20px;white-space:nowrap;">是否固定标签</div>
<div class="a" style="left:491.5px;top:748px;width:300px;text-align:center;line-height:20px;white-space:nowrap;">Boolean</div>
<div class="a" style="left:608px;top:748px;width:300px;text-align:center;line-height:20px;white-space:nowrap;">false</div>
<div class="a" style="left:853px;top:748px;width:44px;height:22px;border-radius:11px;background:#0960bd;opacity:.4"><div class="a" style="left:24px;top:2px;width:18px;height:18px;border-radius:9px;background:#fff"></div></div>
<svg class="a" style="left:982px;top:751px" width="14" height="14" viewBox="0 0 14 14"><path d="M1.2 12.9H13" stroke="#0960bd" stroke-width="1.2"/><path d="M2.4 11L2.8 8.2L9.6 1.2L12 3.6L5.2 10.6Z" fill="none" stroke="#0960bd" stroke-width="1.2" stroke-linejoin="round"/></svg>
<div class="a" style="left:1001px;top:748px;line-height:20px;color:#0960bd">编辑</div>
<div class="a" style="left:1039px;top:751px;width:1px;height:12px;background:#f0f0f0"></div>
<svg class="a" style="left:1052px;top:751px" width="13" height="14" viewBox="0 0 13 14"><path d="M0.6 2.9H12.4M4.2 2.9V1H8.8V2.9M2.2 2.9L2.8 12.6H10.2L10.8 2.9" fill="none" stroke="#ed6f6f" stroke-width="1.2" stroke-linejoin="round"/></svg>
<div class="a" style="left:1070px;top:748px;line-height:20px;color:#ed6f6f">删除</div>
</div>
<div class="a" style="left:1907px;top:141px;width:7px;height:729px;background:#e2e2e2"></div>
<div class="a" style="left:1907px;top:141px;width:7px;height:677px;background:#a8a8a8;border-radius:3px"></div>
<div class="a" style="left:1906px;top:94px;width:8px;height:47px;background:#fafafa"></div>
<div class="a" style="left:787px;top:870px;width:1119px;height:8px;background:#f1f1f1"></div>
<div class="a" style="left:1696px;top:891px;line-height:20px;color:rgba(0,0,0,.85)">共 16 条数据</div>
<div class="a" style="left:1787px;top:889px;width:24px;height:24px;border-radius:2px;background:#0960bd;color:#fff;text-align:center;line-height:24px;font-weight:bold">1</div>
<div class="a" style="left:1817px;top:889px;width:89px;height:24px;border:1px solid #e8e8e8;border-radius:2px;background:#fff"><span class="a" style="left:7px;top:1px;line-height:20px">25 条/页</span><svg class="a" style="left:66px;top:8px" width="12" height="7" viewBox="0 0 12 7"><path d="M1 1L6 6L11 1" fill="none" stroke="#c8c8c8" stroke-width="1"/></svg></div>
<div class="a" style="left:637px;top:128px;width:154px;height:168px;background:#fff;border-radius:4px;box-shadow:0 1px 4px rgba(0,0,0,.12),0 0 0 1px rgba(0,0,0,.04)">
  <div class="a" style="left:0;top:42px;width:154px;height:42px;background:#f5f5f5"></div>
  <svg class="a" style="left:17px;top:13px" width="14" height="14" viewBox="0 0 14 14"><path d="M0.8 13H13" stroke="#333" stroke-width="1.1"/><path d="M2.4 11L2.8 8.2L9.6 1.4L12 3.8L5.2 10.6Z" fill="none" stroke="#333" stroke-width="1.1" stroke-linejoin="round"/></svg>
  <div class="a" style="left:42px;top:11px;line-height:20px;color:rgba(0,0,0,.7)">编辑字典</div>
  <svg class="a" style="left:17px;top:55px" width="14" height="14" viewBox="0 0 14 14"><path d="M7 1.2V12.8M1.2 7H12.8" stroke="#333" stroke-width="1.2"/></svg>
  <div class="a" style="left:42px;top:53px;line-height:20px;color:rgba(0,0,0,.7)">添加新字典</div>
  <svg class="a" style="left:17px;top:97px" width="14" height="14" viewBox="0 0 14 14"><rect x="0.8" y="0.8" width="12.4" height="12.4" rx="0.5" fill="none" stroke="#333" stroke-width="1.1"/><path d="M7 4V10M4 7H10" stroke="#333" stroke-width="1.2"/></svg>
  <div class="a" style="left:42px;top:95px;line-height:20px;color:rgba(0,0,0,.7)">添加项目</div>
  <svg class="a" style="left:17px;top:139px" width="14" height="14" viewBox="0 0 14 14"><path d="M1 3.2H13M4.6 3.2V1.2H9.4V3.2M2.6 3.2L3.2 13H10.8L11.4 3.2" fill="none" stroke="#333" stroke-width="1.1" stroke-linejoin="round"/></svg>
  <div class="a" style="left:42px;top:137px;line-height:20px;color:rgba(0,0,0,.7)">删除字典</div>
</div></body></html>
